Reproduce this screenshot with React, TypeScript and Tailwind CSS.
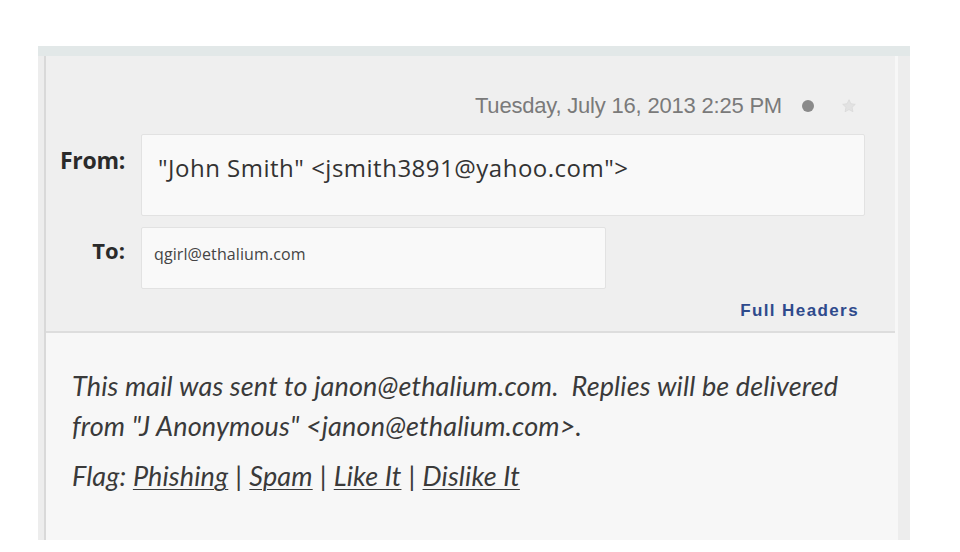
import React from "react";

const flags = ["Phishing", "Spam", "Like It", "Dislike It"];

function Star() {
  return (
    <svg viewBox="0 0 24 24" className="h-[16px] w-[16px]" fill="#e2e2e2" stroke="#d6d6d6" strokeWidth="1">
      <path d="M12 2.5l2.9 6.1 6.6.8-4.9 4.6 1.3 6.6L12 17.3l-5.9 3.3 1.3-6.6-4.9-4.6 6.6-.8z" />
    </svg>
  );
}

export default function App() {
  return (
    <div className="min-h-[552px] w-[960px] bg-white pl-[38px] pt-[46px]">
      <div className="flex h-[494px] w-[872px] flex-col border-t-[10px] border-t-[#e2e8e8] bg-[#ededed] pl-[6px] pr-[12px]">
        <div className="flex flex-1 flex-col border-l-2 border-r-[3px] border-l-[#d9d9d9] border-r-[#f7f7f7]">
          <div className="flex h-[277px] flex-col border-b-2 border-b-[#dddddd] bg-[#efefef]">
            <div className="flex items-center justify-end pr-[38px] pt-[38px]">
              <span className="font-['Liberation_Sans',sans-serif] text-[22px] leading-[24px] tracking-[-0.2px] text-[#7a7a7a]">
                Tuesday, July 16, 2013 2:25 PM
              </span>
              <span className="ml-[20px] h-[12px] w-[12px] rounded-full bg-[#8a8a8a]" />
              <span className="ml-[27px]">
                <Star />
              </span>
            </div>

            <div className="mt-[16px] flex items-start">
              <div className="w-[79px] pt-[12px] text-right font-['Open_Sans',sans-serif] text-[23px] font-bold leading-[28px] tracking-[-0.3px] text-[#2a2a2a]">
                From:
              </div>
              <div className="ml-[16px] flex h-[82px] w-[724px] items-center rounded-[2px] border border-[#e2e2e2] bg-[#f9f9f9] pb-[14px] pl-[16px] font-['Open_Sans',sans-serif] text-[24px] tracking-[0.5px] text-[#333]">
                "John Smith" &lt;jsmith3891@yahoo.com"&gt;
              </div>
            </div>

            <div className="mt-[11px] flex items-start">
              <div className="w-[79px] pt-[9px] text-right font-['Open_Sans',sans-serif] text-[22px] font-bold leading-[28px] tracking-[0px] text-[#2a2a2a]">
                To:
              </div>
              <div className="ml-[16px] flex h-[62px] w-[465px] items-center rounded-[2px] border border-[#e2e2e2] bg-[#f9f9f9] pb-[8px] pl-[12px] font-['Open_Sans',sans-serif] text-[16px] tracking-[0.1px] text-[#444]">
                qgirl@ethalium.com
              </div>
            </div>

            <div className="mt-[12px] flex justify-end pr-[36px]">
              <a className="font-['Liberation_Sans',sans-serif] text-[17px] font-bold leading-[20px] tracking-[1.4px] text-[#2e4a8c]">
                Full Headers
              </a>
            </div>
          </div>

          <div className="flex-1 bg-[#f7f7f7] pl-[26px] pt-[33px] font-['Lato',sans-serif] text-[27px] italic tracking-[0.15px] text-[#3a3a3a]">
            <p className="leading-[40px]">
              This mail was sent to janon@ethalium.com.&nbsp; Replies will be delivered
              <br />
              from "J Anonymous" &lt;janon@ethalium.com&gt;.
            </p>
            <p className="mt-[10px] leading-[40px]">
              Flag:{" "}
              {flags.map((f, i) => (
                <span key={f}>
                  <span className="underline decoration-1 underline-offset-[3px]">{f}</span>
                  {i < flags.length - 1 && <span className="not-italic"> | </span>}
                </span>
              ))}
            </p>
          </div>
        </div>
      </div>
    </div>
  );
}
